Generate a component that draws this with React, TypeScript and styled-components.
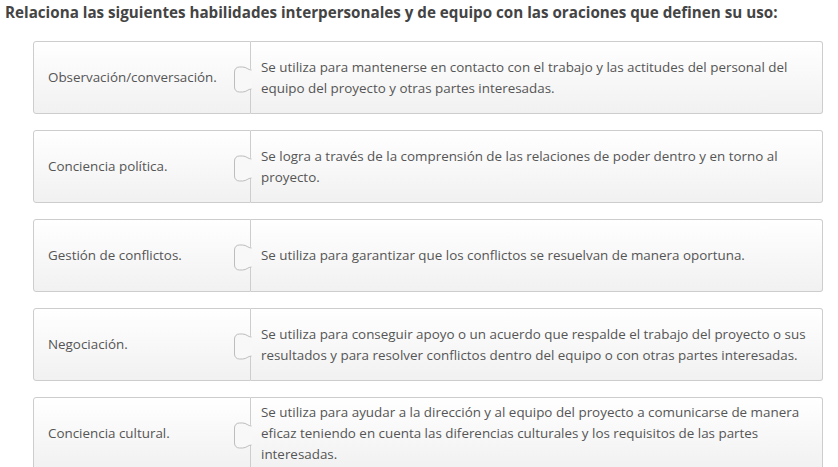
import styled, { createGlobalStyle } from 'styled-components'

const GlobalStyle = createGlobalStyle`
  html, body {
    margin: 0;
    padding: 0;
    background: #fff;
    font-family: "Open Sans", "Liberation Sans", sans-serif;
  }
`

const Page = styled.div`
  padding: 2px 0 0 5px;
`

const Title = styled.h1`
  margin: 0 0 19px;
  font-size: 15.2px;
  line-height: 20px;
  font-weight: 700;
  color: #444;
`

const List = styled.div`
  display: flex;
  flex-direction: column;
  gap: 16px;
  padding-left: 28px;
  width: 790px;
`

const Row = styled.div`
  position: relative;
  display: grid;
  grid-template-columns: 218px 1fr;
  height: 73px;
`

const Piece = styled.div<{ $side: 'left' | 'right' }>`
  display: flex;
  align-items: center;
  box-sizing: border-box;
  background: linear-gradient(#ffffff, #f1f1f1);
  border: 1px solid #cdcdcd;
  border-left: ${(p) => (p.$side === 'right' ? 'none' : '1px solid #cdcdcd')};
  border-radius: ${(p) => (p.$side === 'left' ? '3px 0 0 3px' : '0 3px 3px 0')};
  padding: ${(p) => (p.$side === 'left' ? '0 0 0 14px' : '0 12px 0 10px')};
  font-size: 13.4px;
  line-height: 21px;
  color: #555;
`

const Tab = styled.svg`
  position: absolute;
  left: 199px;
  top: 24px;
`

const PuzzleTab = () => (
  <Tab width="22" height="31" viewBox="0 0 22 31">
    <path
      d="M19 4 C16 4, 14.5 1, 10.5 1 L7.5 1 C4.5 1, 2 3, 2 6.5 L2 21.5 C2 25, 4.5 27, 7.5 27 L10.5 27 C14.5 27, 16 24, 19 24 L20 24 L20 4 Z"
      fill="#f8f8f8"
    />
    <path
      d="M19.5 5 C16 5, 14.5 2, 10.5 2 L7.5 2 C4.5 2, 2.5 4, 2.5 7 L2.5 22 C2.5 25, 4.5 27, 7.5 27 L10.5 27 C14.5 27, 16 24, 19.5 24"
      fill="none"
      stroke="#bdbdbd"
      strokeWidth="1"
    />
  </Tab>
)

const items = [
  [
    'Observación/conversación.',
    'Se utiliza para mantenerse en contacto con el trabajo y las actitudes del personal del equipo del proyecto y otras partes interesadas.',
  ],
  [
    'Conciencia política.',
    'Se logra a través de la comprensión de las relaciones de poder dentro y en torno al proyecto.',
  ],
  [
    'Gestión de conflictos.',
    'Se utiliza para garantizar que los conflictos se resuelvan de manera oportuna.',
  ],
  [
    'Negociación.',
    'Se utiliza para conseguir apoyo o un acuerdo que respalde el trabajo del proyecto o sus resultados y para resolver conflictos dentro del equipo o con otras partes interesadas.',
  ],
  [
    'Conciencia cultural.',
    'Se utiliza para ayudar a la dirección y al equipo del proyecto a comunicarse de manera eficaz teniendo en cuenta las diferencias culturales y los requisitos de las partes interesadas.',
  ],
]

export default function App() {
  return (
    <Page>
      <GlobalStyle />
      <Title>
        Relaciona las siguientes habilidades interpersonales y de equipo con las oraciones que definen su uso:
      </Title>
      <List>
        {items.map(([term, use]) => (
          <Row key={term}>
            <Piece $side="left">{term}</Piece>
            <Piece $side="right">{use}</Piece>
            <PuzzleTab />
          </Row>
        ))}
      </List>
    </Page>
  )
}
